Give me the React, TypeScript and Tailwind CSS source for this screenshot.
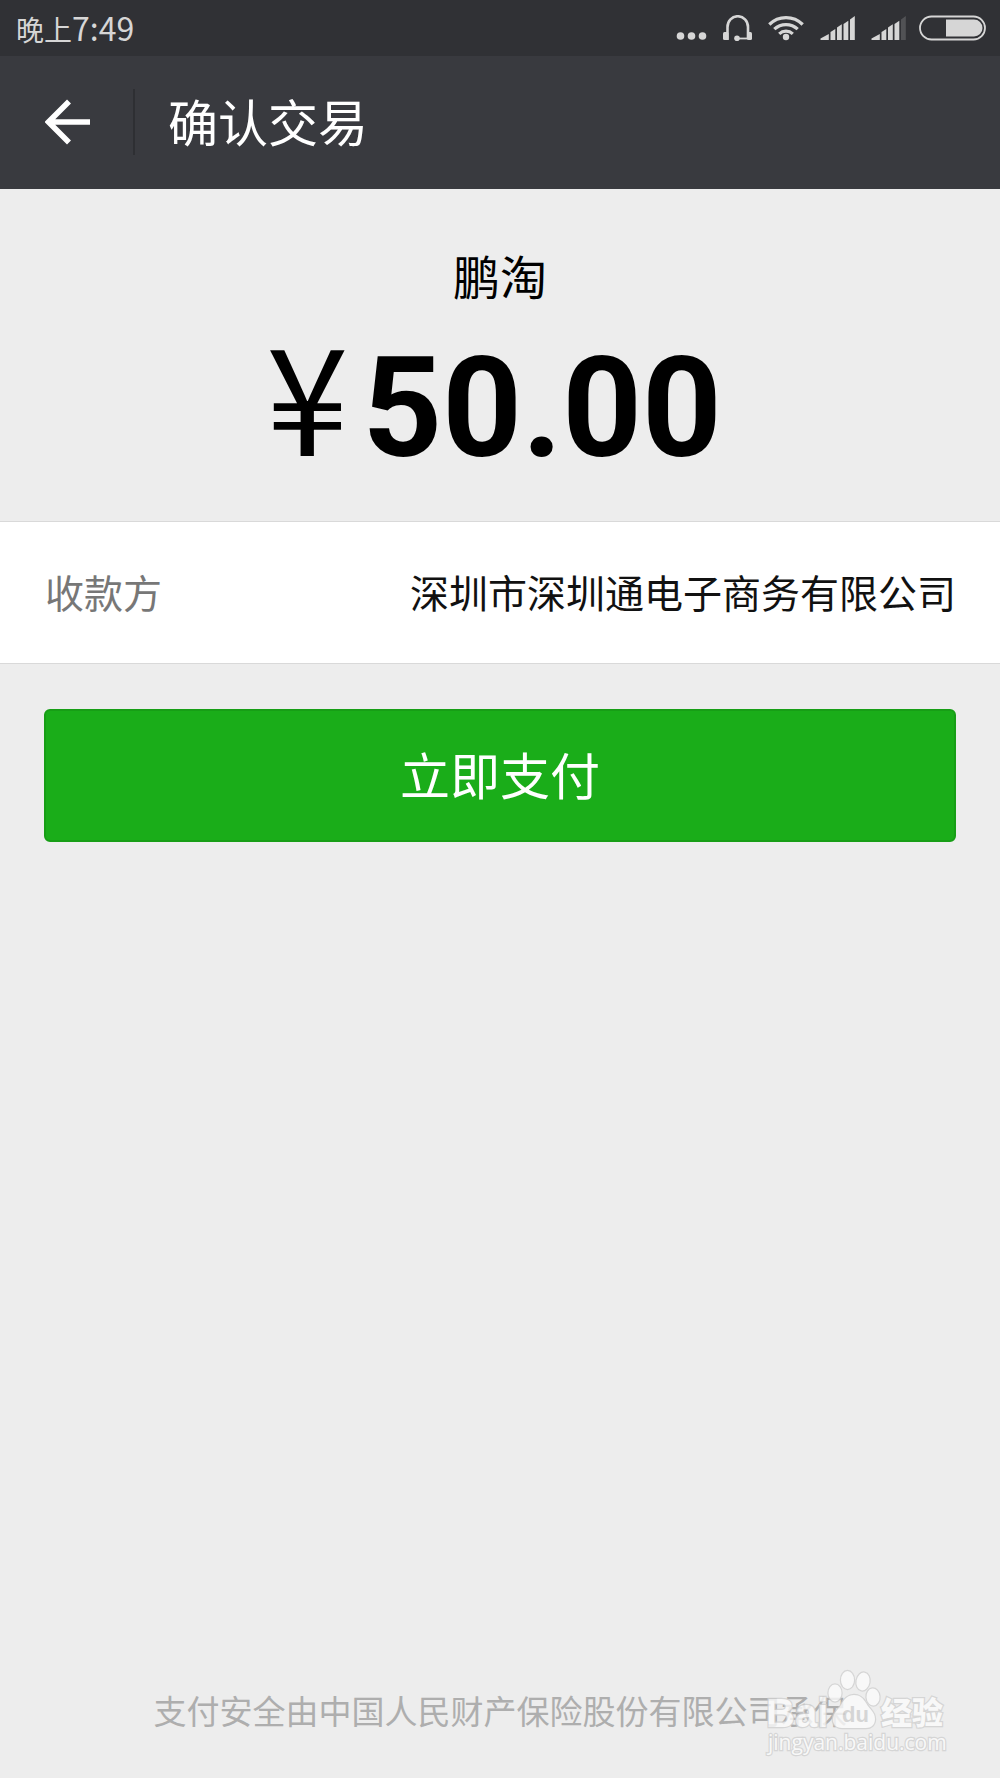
import React from 'react';

const DotsIcon: React.FC = () => (
  <svg width="34" height="26" viewBox="0 0 34 26" fill="currentColor" aria-hidden="true">
    <circle cx="4.5" cy="21" r="3.8" />
    <circle cx="15.5" cy="21" r="3.8" />
    <circle cx="26.5" cy="21" r="3.8" />
  </svg>
);

const HeadsetIcon: React.FC = () => (
  <svg width="32" height="26" viewBox="0 0 32 26" fill="currentColor" aria-hidden="true">
    <path d="M4.5 25V12a10 10.5 0 0 1 20.5 0V24" fill="none" stroke="currentColor" strokeWidth="2.6" />
    <path d="M14 23.5h11" fill="none" stroke="currentColor" strokeWidth="1.8" />
    <rect x="0" y="17" width="5.5" height="8" rx="1.5" />
    <rect x="24" y="17" width="5" height="8" rx="1.5" />
    <circle cx="14" cy="23.2" r="2.8" />
  </svg>
);

const WifiIcon: React.FC = () => (
  <svg width="39" height="26" viewBox="0 0 39 26" aria-hidden="true">
    <g fill="none" stroke="currentColor" strokeWidth="3.2">
      <path d="M1.3 9.5a23.5 23.5 0 0 1 33.4 0" />
      <path d="M6.3 14.2a17 17 0 0 1 23.4 0" />
      <path d="M11.2 18.8a10 10 0 0 1 13.6 0" />
    </g>
    <circle cx="18" cy="22" r="3.2" fill="currentColor" />
  </svg>
);

const SignalIcon: React.FC<{ weak?: boolean }> = ({ weak }) => (
  <svg width={weak ? 35 : 38} height="26" viewBox={weak ? '0 0 35 26' : '0 0 38 26'} fill="currentColor" aria-hidden="true">
    <path d="M0.5 25v-1.5L8.8 19v6z" />
    <path d="M10.5 25v-8l4.8-3v11z" />
    <path d="M17 25V12.5l4.8-3.2V25z" />
    <path d="M23.5 25V9l4.8-3.3V25z" />
    <path d="M30 25V4.5l4.8-3.5v24z" opacity={weak ? 0.2 : 1} />
  </svg>
);

const BatteryIcon: React.FC = () => (
  <svg width="67" height="26" viewBox="0 0 67 26" aria-hidden="true">
    <rect x="1" y="1.5" width="65" height="23" rx="11.5" fill="none" stroke="currentColor" strokeWidth="1.8" />
    <path d="M27 4.5h28a8.5 8.5 0 0 1 0 17H27z" fill="currentColor" />
  </svg>
);

const BackIcon: React.FC = () => (
  <svg width="46" height="46" viewBox="0 0 46 46" fill="none" stroke="currentColor" strokeWidth="5.6" aria-hidden="true">
    <path d="M24 2.5 3.5 23 24 43.5M3.5 23H45" />
  </svg>
);

const StatusBar: React.FC = () => (
  <div className="flex h-14 items-center justify-between bg-[#303135] pl-4 pr-3.5 text-[#d6d6d6]">
    <p className="pb-0.5 text-[28px] leading-none">
      晚上<span className="text-[32px]">7:49</span>
    </p>
    <div className="flex items-center gap-[13px]">
      <DotsIcon />
      <HeadsetIcon />
      <WifiIcon />
      <SignalIcon />
      <SignalIcon weak />
      <BatteryIcon />
    </div>
  </div>
);

const Header: React.FC = () => (
  <header className="flex h-[133px] items-center bg-[#393a3f] pb-0.5 text-white">
    <button type="button" aria-label="返回" className="flex h-full w-[133px] items-center pl-[45px]">
      <BackIcon />
    </button>
    <div className="h-[66px] w-0.5 bg-[#2e2f33]" />
    <h1 className="pb-1 pl-[33px] text-[50px] leading-none">确认交易</h1>
  </header>
);

const Watermark: React.FC = () => (
  <svg
    className="absolute bottom-5 right-12"
    width="190"
    height="94"
    viewBox="0 0 190 94"
    fill="#fbfbfb"
    stroke="#d0d0d0"
    strokeWidth="2.4"
    paintOrder="stroke"
    aria-hidden="true"
  >
    <g opacity="0.8">
      <text x="4" y="63" fontSize="40" fontWeight="700" fontFamily="Liberation Sans, sans-serif">Bai</text>
      <ellipse cx="73" cy="29" rx="6.5" ry="8.5" />
      <ellipse cx="85.5" cy="16" rx="6.5" ry="9" />
      <ellipse cx="101" cy="17.5" rx="6.5" ry="9" transform="rotate(10 101 17.5)" />
      <ellipse cx="111" cy="33" rx="6.5" ry="8.5" transform="rotate(-5 111 33)" />
      <path d="M92 31c6 0 9 3 12 8 4 7 9 9 9 16 0 6-4 9-9 9H80c-6 0-10-4-9-10 1-6 5-8 8-13 3-6 7-10 13-10z" />
      <text x="80" y="58" fontSize="22" fontWeight="700" fill="#d0d0d0" stroke="none" fontFamily="Liberation Sans, sans-serif">du</text>
      <text x="119" y="60" fontSize="31" fontWeight="900" fontFamily="Noto Sans CJK SC, sans-serif">经验</text>
      <text x="6" y="86" fontSize="21" fontFamily="Open Sans, sans-serif">jingyan.baidu.com</text>
    </g>
  </svg>
);

const App: React.FC = () => {
  return (
    <div className="relative flex min-h-screen flex-col bg-[#ededed] font-['Noto_Sans_CJK_SC',sans-serif] text-black">
      <StatusBar />
      <Header />
      <main className="flex flex-1 flex-col">
        <section className="flex h-[332px] flex-col items-center pt-[61px]">
          <h2 className="text-[47px] leading-[50px]">鹏淘</h2>
          <p className="mt-6 flex items-baseline gap-3.5 pr-3 leading-[136px]">
            <span className="text-[148px]">¥</span>
            <span className="font-[Roboto,sans-serif] text-[139px] font-bold">50.00</span>
          </p>
        </section>
        <dl className="flex h-[143px] items-center justify-between border-y border-[#d9d9d9] bg-white pl-[45px] pr-11 pb-0.5 text-[39px] leading-none">
          <dt className="text-[#777777]">收款方</dt>
          <dd className="text-[#111111]">深圳市深圳通电子商务有限公司</dd>
        </dl>
        <div className="px-11 pt-[45px]">
          <button
            type="button"
            className="h-[133px] w-full rounded-md border-2 border-[#179e16] bg-[#1aad19] pb-1.5 text-[50px] leading-none text-white"
          >
            立即支付
          </button>
        </div>
      </main>
      <footer className="pb-[50px] text-center text-[33px] leading-9 text-[#aeaeae]">
        支付安全由中国人民财产保险股份有限公司承保
      </footer>
      <Watermark />
    </div>
  );
};

export default App;
